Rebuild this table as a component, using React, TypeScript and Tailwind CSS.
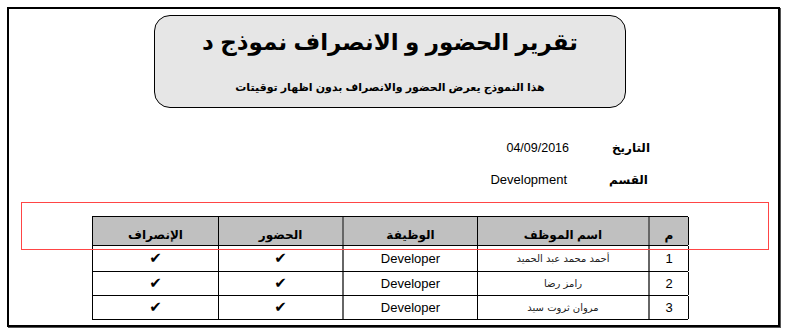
import React from "react";

const rows = [
  { no: "1", name: "أحمد  محمد عبد الحميد", job: "Developer" },
  { no: "2", name: "رامز رضا", job: "Developer" },
  { no: "3", name: "مروان ثروت سيد", job: "Developer" },
];

const rowHeights = ["h-[26px]", "h-[24px]", "h-[23px]"];
const cols = "grid grid-cols-[126px_125px_134px_172px_39px]";

export default function App() {
  return (
    <div
      className="w-[787px] h-[335px] bg-white p-[7px]"
      style={{ fontFamily: '"Liberation Sans", "DejaVu Sans", sans-serif' }}
    >
      <div className="relative w-[773px] h-[320px] border-2 border-black shadow-[1px_1px_0_#555] pt-[6px]">
        {/* header box */}
        <div className="ml-[145px] w-[472px] h-[93px] rounded-[16px] border border-black bg-[#e6e6e6] flex flex-col items-center" dir="rtl">
          <div className="mt-[9px] text-[23px] font-bold leading-[34px] text-black">
            تقرير الحضور و الانصراف نموذج د
          </div>
          <div className="mt-[20px] text-[11px] font-bold leading-[16px] text-black">
            هذا النموذج يعرض الحضور والانصراف بدون اظهار توقيتات
          </div>
        </div>

        {/* info rows */}
        <div dir="rtl" className="mt-[30px] pr-[128px] flex flex-col">
          <div className="flex h-[20px] items-center">
            <div className="w-[81px] text-[12px] font-bold">التاريخ</div>
            <div className="text-[12.5px]" dir="ltr">04/09/2016</div>
          </div>
          <div className="flex h-[20px] items-center mt-[12px]">
            <div className="w-[83px] text-[12px] font-bold pr-[2px]">القسم</div>
            <div className="text-[13px]" dir="ltr">Development</div>
          </div>
        </div>

        {/* table */}
        <div className="mt-[26px] ml-[83px] w-[596px] border-l border-t border-b border-black text-[12px]">
          <div className={`${cols} h-[29px] bg-[#c0c0c0] border-b border-black font-bold`}>
            <div className="border-r border-black flex items-end justify-center pb-[1px]">الإنصراف</div>
            <div className="border-r-2 border-[#666] flex items-end justify-center pb-[1px]">الحضور</div>
            <div className="border-r border-black flex items-end justify-center pb-[1px]">الوظيفة</div>
            <div className="border-r-2 border-[#666] flex items-end justify-center pb-[1px]">اسم الموظف</div>
            <div className="border-r border-black flex items-end justify-center pb-[1px]">م</div>
          </div>
          {rows.map((r, i) => (
            <div
              key={r.no}
              className={`${cols} ${rowHeights[i]} ${i < 2 ? "border-b border-black" : ""}`}
            >
              <div className="border-r border-black flex items-center justify-center text-[15px]">✔</div>
              <div className="border-r-2 border-[#666] flex items-center justify-center text-[15px]">✔</div>
              <div className="border-r border-black flex items-center justify-center text-[13px]">{r.job}</div>
              <div className="border-r-2 border-[#666] flex items-center justify-center text-[10px] text-[#222]" dir="rtl" style={{ fontFamily: '"DejaVu Sans", sans-serif' }}>
                {r.name}
              </div>
              <div className="border-r border-black flex items-center justify-center text-[13px]">{r.no}</div>
            </div>
          ))}
        </div>

        {/* red selection rectangle */}
        <div className="absolute left-[12px] top-[193px] w-[748px] h-[48px] border border-[#ff4545] pointer-events-none" />
      </div>
    </div>
  );
}
